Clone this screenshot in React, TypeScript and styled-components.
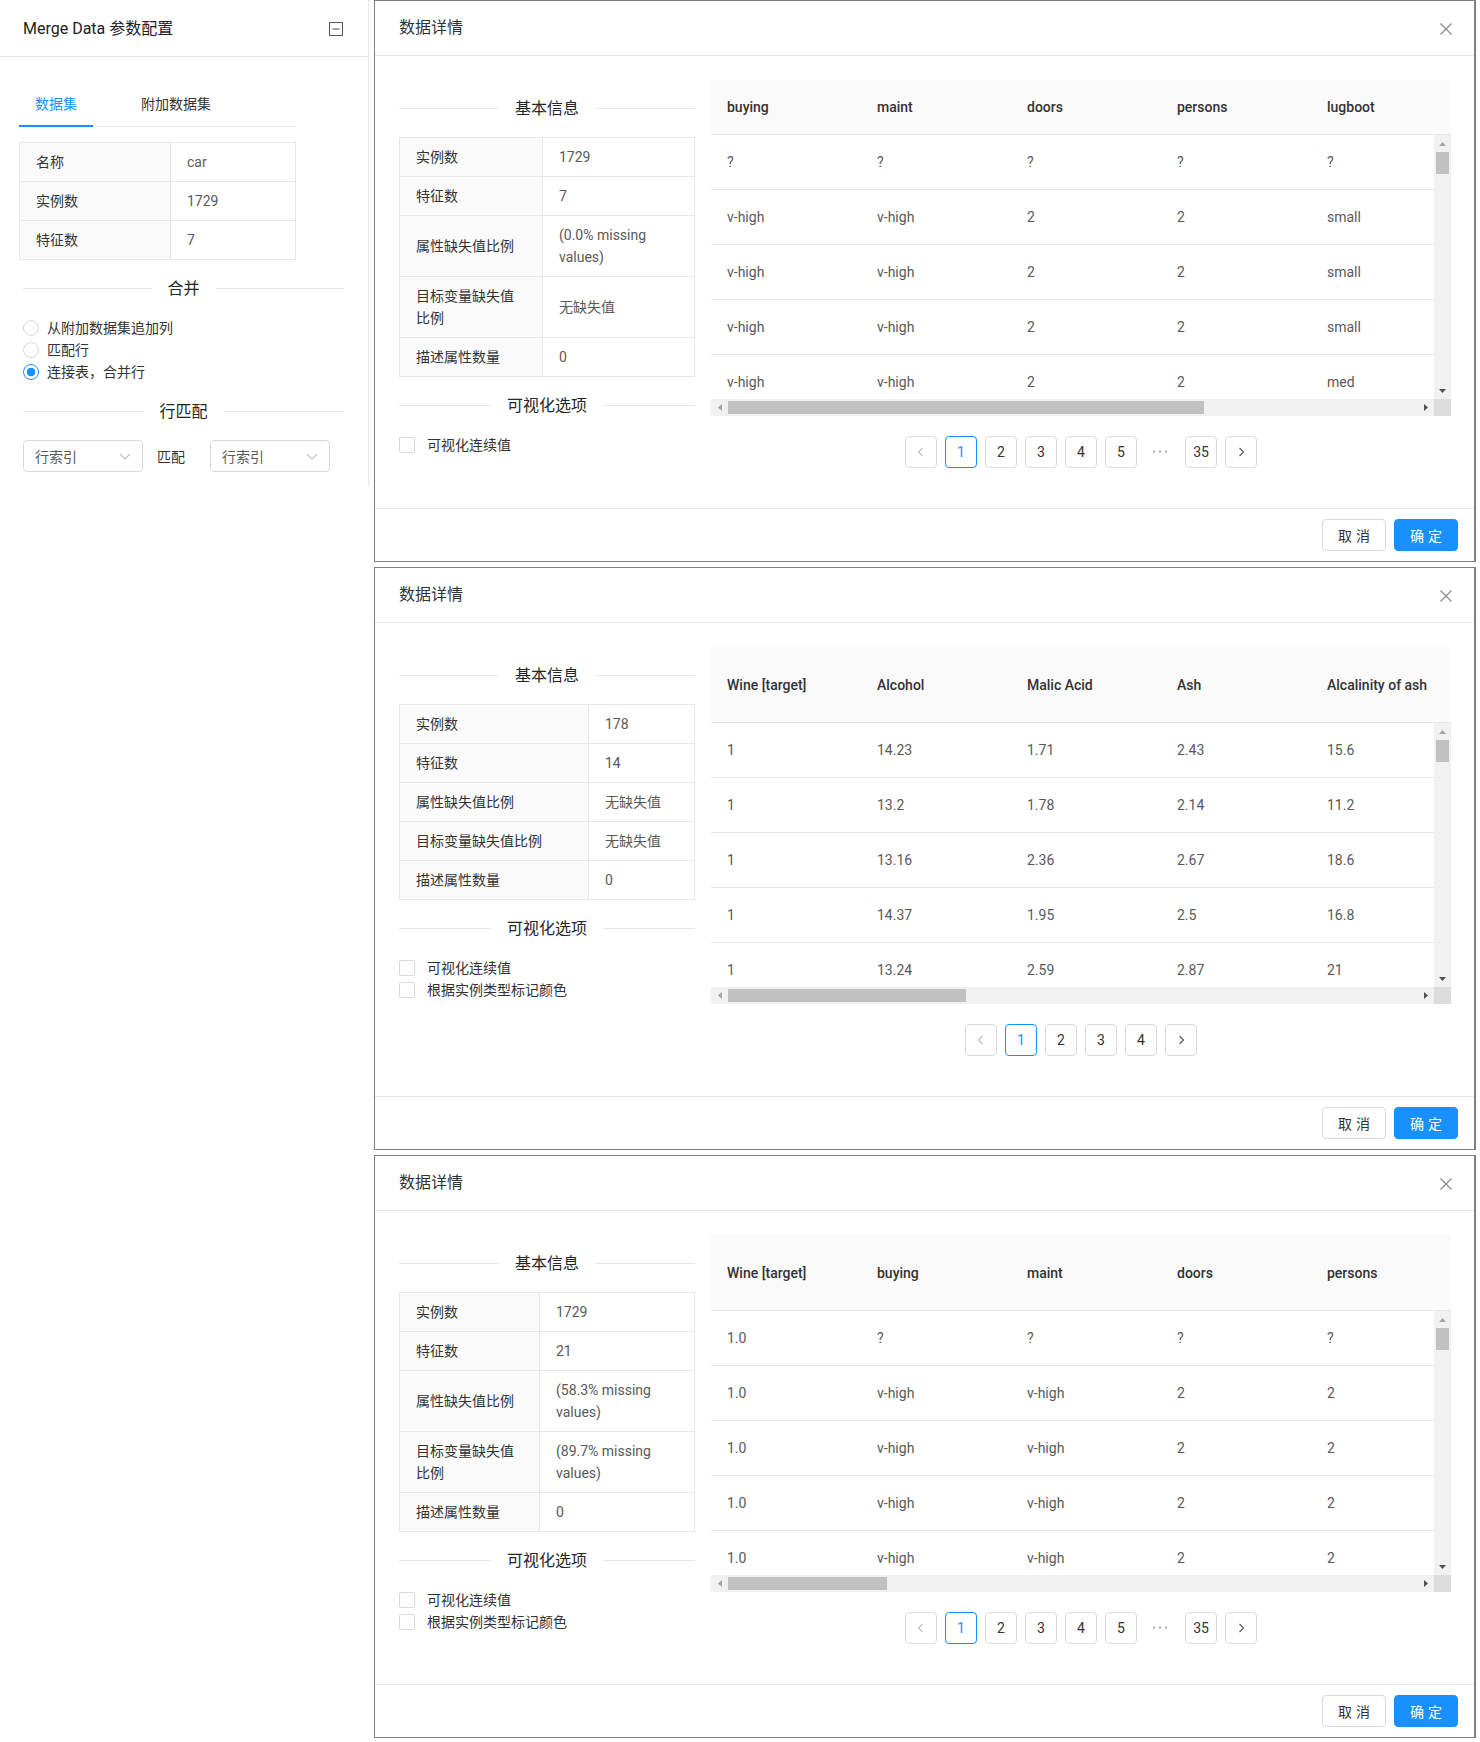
import React from "react";
import styled, { createGlobalStyle } from "styled-components";

const GlobalStyle = createGlobalStyle`
  html, body { margin: 0; padding: 0; background: #fff; }
  body {
    font-family: Roboto, "Noto Sans CJK SC", "Noto Sans", sans-serif;
    font-size: 14px;
    color: #333;
  }
  * { box-sizing: border-box; }
`;

const BLUE = "#1890ff";
const LINE = "#e8e8e8";

/* ---------- page ---------- */
const Page = styled.div`
  display: flex;
  align-items: flex-start;
  gap: 5px;
  width: 1480px;
`;

/* ---------- side panel ---------- */
const SidePanel = styled.aside`
  width: 369px;
  flex-shrink: 0;
  border-right: 1px solid ${LINE};
`;

const PanelHeader = styled.div`
  display: flex;
  align-items: center;
  justify-content: space-between;
  padding: 18px 25px 16px 23px;
  border-bottom: 1px solid ${LINE};
`;

const PanelTitle = styled.div`
  font-size: 16px;
  line-height: 22px;
  color: #222;
`;

const IconButton = styled.span`
  display: inline-flex;
  color: #595959;
`;

const PanelBody = styled.div`
  padding: 24px 24px 14px 23px;
`;

const Tabs = styled.div`
  margin-left: -4px;
  width: 277px;
`;

const TabNav = styled.div`
  display: flex;
  border-bottom: 1px solid ${LINE};
`;

const Tab = styled.div<{ $active?: boolean }>`
  padding: 12px 16px 10px;
  margin-right: 32px;
  margin-bottom: -1px;
  line-height: 22px;
  font-size: 14px;
  color: ${(p) => (p.$active ? BLUE : "#333")};
  border-bottom: 2px solid ${(p) => (p.$active ? BLUE : "transparent")};
`;

const TabContent = styled.div`
  margin-top: 15px;
`;

/* ---------- descriptions grid ---------- */
const InfoGrid = styled.div<{ $labelWidth: number }>`
  display: grid;
  grid-template-columns: ${(p) => p.$labelWidth}px 1fr;
  border-top: 1px solid ${LINE};
  border-left: 1px solid ${LINE};
`;

const InfoLabel = styled.div`
  display: flex;
  align-items: center;
  padding: 8px 16px;
  line-height: 22px;
  font-size: 14px;
  background: #fafafa;
  color: #333;
  border-right: 1px solid ${LINE};
  border-bottom: 1px solid ${LINE};
`;

const InfoValue = styled(InfoLabel)`
  background: #fff;
  color: #595959;
`;

/* ---------- divider ---------- */
const TitledDivider = styled.div`
  display: flex;
  align-items: center;
  margin: 16px 0;
  font-size: 16px;
  line-height: 25px;
  color: #262626;
  white-space: nowrap;
  &::before,
  &::after {
    content: "";
    flex: 1;
    border-top: 1px solid ${LINE};
  }
`;

const DividerText = styled.span`
  padding: 0 16px;
`;

/* ---------- radios ---------- */
const RadioGroup = styled.div`
  display: flex;
  flex-direction: column;
`;

const RadioRow = styled.label`
  display: flex;
  align-items: center;
  line-height: 22px;
  font-size: 14px;
  color: #333;
`;

const RadioCircle = styled.span<{ $checked?: boolean }>`
  width: 16px;
  height: 16px;
  border-radius: 50%;
  border: 1px solid ${(p) => (p.$checked ? BLUE : "#d9d9d9")};
  background: ${(p) =>
    p.$checked ? `radial-gradient(circle, ${BLUE} 0 4px, #fff 4.6px)` : "#fff"};
  margin-right: 8px;
  flex-shrink: 0;
`;

/* ---------- select row ---------- */
const SelectRow = styled.div`
  display: flex;
  align-items: center;
`;

const SelectBox = styled.div`
  width: 120px;
  height: 32px;
  padding: 0 11px;
  display: flex;
  align-items: center;
  justify-content: space-between;
  border: 1px solid #d9d9d9;
  border-radius: 4px;
  color: #595959;
  font-size: 14px;
`;

const MatchText = styled.span`
  margin: 0 25px 0 14px;
  color: #333;
  font-size: 14px;
`;

/* ---------- modals ---------- */
const ModalStack = styled.div`
  display: flex;
  flex-direction: column;
  gap: 5px;
  width: 1102px;
`;

const Modal = styled.section`
  border: 1px solid #7f7f7f;
  border-right-width: 2px;
  background: #fff;
`;

const ModalHeader = styled.header`
  display: flex;
  align-items: center;
  justify-content: space-between;
  padding: 16px 22px 16px 24px;
  border-bottom: 1px solid ${LINE};
`;

const ModalTitle = styled.div`
  font-size: 16px;
  line-height: 22px;
  color: #333;
`;

const CloseBtn = styled.span`
  display: inline-flex;
  margin-top: 2px;
`;

const ModalBody = styled.div`
  display: flex;
  align-items: flex-start;
  gap: 16px;
  padding: 24px 23px 24px 24px;
`;

const LeftCol = styled.div`
  width: 296px;
  flex-shrink: 0;
`;

const RightCol = styled.div`
  flex: 1;
  min-width: 0;
`;

const CheckGroup = styled.div`
  display: flex;
  flex-direction: column;
`;

const CheckRow = styled.label`
  display: flex;
  align-items: center;
  line-height: 22px;
  font-size: 14px;
  color: #333;
`;

const CheckBox = styled.span`
  width: 16px;
  height: 16px;
  border: 1px solid #d9d9d9;
  border-radius: 2px;
  margin-right: 12px;
  flex-shrink: 0;
`;

/* ---------- data table ---------- */
const TableFrame = styled.div`
  display: flex;
  flex-direction: column;
`;

const HeaderRow = styled.div<{ $tall?: boolean }>`
  display: flex;
  height: ${(p) => (p.$tall ? 76 : 55)}px;
  background: #fafafa;
  border-bottom: 1px solid ${LINE};
  overflow: hidden;
`;

const HeadCell = styled.div`
  width: 150px;
  flex-shrink: 0;
  padding: 0 16px;
  display: flex;
  align-items: center;
  font-size: 14px;
  line-height: 22px;
  font-weight: 500;
  color: #333;
  white-space: nowrap;
`;

const BodyArea = styled.div`
  display: flex;
  height: 264px;
`;

const Viewport = styled.div`
  flex: 1;
  overflow: hidden;
`;

const BodyRow = styled.div`
  display: flex;
  border-bottom: 1px solid ${LINE};
`;

const BodyCell = styled.div`
  width: 150px;
  flex-shrink: 0;
  padding: 16px;
  line-height: 22px;
  font-size: 14px;
  color: #595959;
  white-space: nowrap;
`;

const VScroll = styled.div`
  width: 17px;
  display: flex;
  flex-direction: column;
  background: #f1f1f1;
`;

const HScrollRow = styled.div`
  display: flex;
  height: 17px;
`;

const HScroll = styled.div`
  flex: 1;
  display: flex;
  background: #f1f1f1;
`;

const ScrollCorner = styled.div`
  width: 17px;
  background: #dcdcdc;
`;

const ArrowBox = styled.div`
  width: 17px;
  height: 17px;
  flex-shrink: 0;
  display: flex;
  align-items: center;
  justify-content: center;
`;

const Track = styled.div<{ $vertical?: boolean }>`
  flex: 1;
  display: flex;
  flex-direction: ${(p) => (p.$vertical ? "column" : "row")};
  padding: ${(p) => (p.$vertical ? "0 2px" : "2px 0")};
`;

const Thumb = styled.div`
  background: #c1c1c1;
  flex-shrink: 0;
`;

/* ---------- pagination ---------- */
const Pager = styled.div`
  display: flex;
  justify-content: center;
  gap: 8px;
  margin: 20px 0 16px;
`;

const PageItem = styled.div<{ $active?: boolean }>`
  width: 32px;
  height: 32px;
  display: flex;
  align-items: center;
  justify-content: center;
  border: 1px solid ${(p) => (p.$active ? BLUE : "#d9d9d9")};
  border-radius: 4px;
  font-size: 14px;
  color: ${(p) => (p.$active ? BLUE : "#333")};
`;

const Ellipsis = styled.div`
  width: 32px;
  height: 32px;
  display: flex;
  align-items: center;
  justify-content: center;
  color: #bfbfbf;
  font-size: 12px;
  letter-spacing: 2px;
`;

/* ---------- footer ---------- */
const ModalFooter = styled.footer`
  display: flex;
  justify-content: flex-end;
  gap: 8px;
  padding: 10px 16px;
  border-top: 1px solid ${LINE};
`;

const Button = styled.button<{ $primary?: boolean }>`
  width: 64px;
  height: 32px;
  padding: 0;
  border-radius: 4px;
  font-family: inherit;
  font-size: 14px;
  border: 1px solid ${(p) => (p.$primary ? BLUE : "#d9d9d9")};
  background: ${(p) => (p.$primary ? BLUE : "#fff")};
  color: ${(p) => (p.$primary ? "#fff" : "#333")};
  letter-spacing: 4px;
  text-indent: 4px;
`;

/* ---------- icons ---------- */
const MinusSquareIcon = () => (
  <svg width="14" height="14" viewBox="0 0 14 14" fill="none" stroke="currentColor" strokeWidth="1.1">
    <rect x="0.5" y="0.5" width="13" height="13" rx="0.5" />
    <line x1="3.5" y1="7" x2="10.5" y2="7" />
  </svg>
);

const CloseIcon = () => (
  <svg width="12" height="12" viewBox="0 0 12 12" stroke="#8c8c8c" strokeWidth="1.2">
    <line x1="0.5" y1="0.5" x2="11.5" y2="11.5" />
    <line x1="11.5" y1="0.5" x2="0.5" y2="11.5" />
  </svg>
);

const ChevronDown = () => (
  <svg width="12" height="12" viewBox="0 0 12 12" fill="none" stroke="#bfbfbf" strokeWidth="1.1">
    <polyline points="1,4 6,9 11,4" />
  </svg>
);

const Chevron = ({ dir, color }: { dir: "left" | "right"; color: string }) => (
  <svg width="10" height="10" viewBox="0 0 10 10" fill="none" stroke={color} strokeWidth="1.2">
    <polyline points={dir === "left" ? "6.5,1 2.5,5 6.5,9" : "3.5,1 7.5,5 3.5,9"} />
  </svg>
);

const Tri = ({ dir, color }: { dir: "up" | "down" | "left" | "right"; color: string }) => {
  const pts = {
    up: "0,4 3.5,0 7,4",
    down: "0,0 3.5,4 7,0",
    left: "4,0 0,3.5 4,7",
    right: "0,0 4,3.5 0,7",
  }[dir];
  const vertical = dir === "up" || dir === "down";
  return (
    <svg width={vertical ? 7 : 4} height={vertical ? 4 : 7} viewBox={vertical ? "0 0 7 4" : "0 0 4 7"}>
      <polygon points={pts} fill={color} />
    </svg>
  );
};

/* ---------- data ---------- */
type InfoRow = [string, string];
type PageToken = number | "...";

type DetailSpec = {
  labelWidth: number;
  info: InfoRow[];
  checks: string[];
  columns: string[];
  rows: string[][];
  totalCols: number;
  totalRows: number;
  tallHeader?: boolean;
  pages: PageToken[];
};

const details: DetailSpec[] = [
  {
    labelWidth: 143,
    info: [
      ["实例数", "1729"],
      ["特征数", "7"],
      ["属性缺失值比例", "(0.0% missing values)"],
      ["目标变量缺失值比例", "无缺失值"],
      ["描述属性数量", "0"],
    ],
    checks: ["可视化连续值"],
    columns: ["buying", "maint", "doors", "persons", "lugboot"],
    rows: [
      ["?", "?", "?", "?", "?"],
      ["v-high", "v-high", "2", "2", "small"],
      ["v-high", "v-high", "2", "2", "small"],
      ["v-high", "v-high", "2", "2", "small"],
      ["v-high", "v-high", "2", "2", "med"],
    ],
    totalCols: 7,
    totalRows: 50,
    pages: [1, 2, 3, 4, 5, "...", 35],
  },
  {
    labelWidth: 189,
    info: [
      ["实例数", "178"],
      ["特征数", "14"],
      ["属性缺失值比例", "无缺失值"],
      ["目标变量缺失值比例", "无缺失值"],
      ["描述属性数量", "0"],
    ],
    checks: ["可视化连续值", "根据实例类型标记颜色"],
    columns: ["Wine [target]", "Alcohol", "Malic Acid", "Ash", "Alcalinity of ash"],
    rows: [
      ["1", "14.23", "1.71", "2.43", "15.6"],
      ["1", "13.2", "1.78", "2.14", "11.2"],
      ["1", "13.16", "2.36", "2.67", "18.6"],
      ["1", "14.37", "1.95", "2.5", "16.8"],
      ["1", "13.24", "2.59", "2.87", "21"],
    ],
    totalCols: 14,
    totalRows: 50,
    tallHeader: true,
    pages: [1, 2, 3, 4],
  },
  {
    labelWidth: 140,
    info: [
      ["实例数", "1729"],
      ["特征数", "21"],
      ["属性缺失值比例", "(58.3% missing values)"],
      ["目标变量缺失值比例", "(89.7% missing values)"],
      ["描述属性数量", "0"],
    ],
    checks: ["可视化连续值", "根据实例类型标记颜色"],
    columns: ["Wine [target]", "buying", "maint", "doors", "persons"],
    rows: [
      ["1.0", "?", "?", "?", "?"],
      ["1.0", "v-high", "v-high", "2", "2"],
      ["1.0", "v-high", "v-high", "2", "2"],
      ["1.0", "v-high", "v-high", "2", "2"],
      ["1.0", "v-high", "v-high", "2", "2"],
    ],
    totalCols: 21,
    totalRows: 50,
    tallHeader: true,
    pages: [1, 2, 3, 4, 5, "...", 35],
  },
];

/* ---------- composed parts ---------- */
const VIEW_W = 724;
const VIEW_H = 264;
const COL_W = 150;
const ROW_H = 55;

const DataTable = ({ spec }: { spec: DetailSpec }) => {
  const hThumb = Math.round(((VIEW_W - 34) * VIEW_W) / (spec.totalCols * COL_W));
  const vThumb = Math.max(18, Math.round(((VIEW_H - 34) * VIEW_H) / (spec.totalRows * ROW_H)));
  return (
    <TableFrame>
      <HeaderRow $tall={spec.tallHeader}>
        {spec.columns.map((c) => (
          <HeadCell key={c}>{c}</HeadCell>
        ))}
      </HeaderRow>
      <BodyArea>
        <Viewport>
          {spec.rows.map((r, i) => (
            <BodyRow key={i}>
              {r.map((v, j) => (
                <BodyCell key={j}>{v}</BodyCell>
              ))}
            </BodyRow>
          ))}
        </Viewport>
        <VScroll>
          <ArrowBox>
            <Tri dir="up" color="#a3a3a3" />
          </ArrowBox>
          <Track $vertical>
            <Thumb style={{ height: vThumb }} />
          </Track>
          <ArrowBox>
            <Tri dir="down" color="#505050" />
          </ArrowBox>
        </VScroll>
      </BodyArea>
      <HScrollRow>
        <HScroll>
          <ArrowBox>
            <Tri dir="left" color="#a3a3a3" />
          </ArrowBox>
          <Track>
            <Thumb style={{ width: hThumb }} />
          </Track>
          <ArrowBox>
            <Tri dir="right" color="#505050" />
          </ArrowBox>
        </HScroll>
        <ScrollCorner />
      </HScrollRow>
      <Pager>
        <PageItem>
          <Chevron dir="left" color="#bfbfbf" />
        </PageItem>
        {spec.pages.map((p, i) =>
          p === "..." ? (
            <Ellipsis key={i}>•••</Ellipsis>
          ) : (
            <PageItem key={i} $active={p === 1}>
              {p}
            </PageItem>
          )
        )}
        <PageItem>
          <Chevron dir="right" color="#595959" />
        </PageItem>
      </Pager>
    </TableFrame>
  );
};

const DetailModal = ({ spec }: { spec: DetailSpec }) => (
  <Modal>
    <ModalHeader>
      <ModalTitle>数据详情</ModalTitle>
      <CloseBtn>
        <CloseIcon />
      </CloseBtn>
    </ModalHeader>
    <ModalBody>
      <LeftCol>
        <TitledDivider>
          <DividerText>基本信息</DividerText>
        </TitledDivider>
        <InfoGrid $labelWidth={spec.labelWidth}>
          {spec.info.map(([k, v]) => (
            <React.Fragment key={k}>
              <InfoLabel>{k}</InfoLabel>
              <InfoValue>{v}</InfoValue>
            </React.Fragment>
          ))}
        </InfoGrid>
        <TitledDivider>
          <DividerText>可视化选项</DividerText>
        </TitledDivider>
        <CheckGroup>
          {spec.checks.map((c) => (
            <CheckRow key={c}>
              <CheckBox />
              {c}
            </CheckRow>
          ))}
        </CheckGroup>
      </LeftCol>
      <RightCol>
        <DataTable spec={spec} />
      </RightCol>
    </ModalBody>
    <ModalFooter>
      <Button>取消</Button>
      <Button $primary>确定</Button>
    </ModalFooter>
  </Modal>
);

const radios = [
  { label: "从附加数据集追加列", checked: false },
  { label: "匹配行", checked: false },
  { label: "连接表，合并行", checked: true },
];

export default function App() {
  return (
    <>
      <GlobalStyle />
      <Page>
        <SidePanel>
          <PanelHeader>
            <PanelTitle>Merge Data 参数配置</PanelTitle>
            <IconButton>
              <MinusSquareIcon />
            </IconButton>
          </PanelHeader>
          <PanelBody>
            <Tabs>
              <TabNav>
                <Tab $active>数据集</Tab>
                <Tab>附加数据集</Tab>
              </TabNav>
              <TabContent>
                <InfoGrid $labelWidth={151}>
                  <InfoLabel>名称</InfoLabel>
                  <InfoValue>car</InfoValue>
                  <InfoLabel>实例数</InfoLabel>
                  <InfoValue>1729</InfoValue>
                  <InfoLabel>特征数</InfoLabel>
                  <InfoValue>7</InfoValue>
                </InfoGrid>
              </TabContent>
            </Tabs>
            <TitledDivider>
              <DividerText>合并</DividerText>
            </TitledDivider>
            <RadioGroup>
              {radios.map((r) => (
                <RadioRow key={r.label}>
                  <RadioCircle $checked={r.checked} />
                  {r.label}
                </RadioRow>
              ))}
            </RadioGroup>
            <TitledDivider>
              <DividerText>行匹配</DividerText>
            </TitledDivider>
            <SelectRow>
              <SelectBox>
                行索引
                <ChevronDown />
              </SelectBox>
              <MatchText>匹配</MatchText>
              <SelectBox>
                行索引
                <ChevronDown />
              </SelectBox>
            </SelectRow>
          </PanelBody>
        </SidePanel>
        <ModalStack>
          {details.map((d, i) => (
            <DetailModal key={i} spec={d} />
          ))}
        </ModalStack>
      </Page>
    </>
  );
}
